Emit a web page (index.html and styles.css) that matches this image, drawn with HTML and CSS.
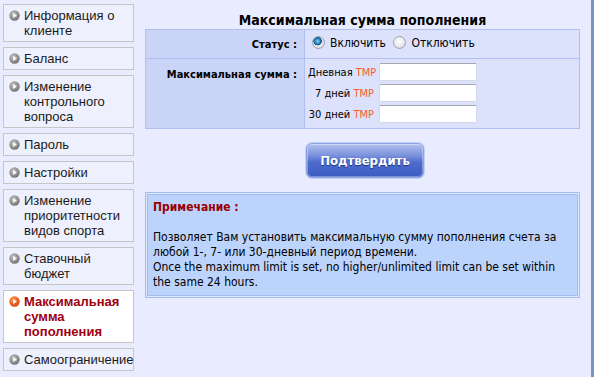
FILE: index.html
```html
<!DOCTYPE html>
<html>
<head>
<meta charset="utf-8">
<link rel="stylesheet" href="styles.css">
</head>
<body>
<div class="page">
  <nav class="side">
    <div class="item"><svg class="ico" viewBox="0 0 11 11"><defs><radialGradient id="g" cx="40%" cy="35%" r="70%"><stop offset="0" stop-color="#c4c4c4"/><stop offset="1" stop-color="#6e6e6e"/></radialGradient></defs><circle cx="5.5" cy="5.5" r="5.2" fill="url(#g)"/><path d="M4.2 3 L7.8 5.5 L4.2 8 Z" fill="#fff"/></svg><span>Информация о клиенте</span></div>
    <div class="item"><svg class="ico" viewBox="0 0 11 11"><circle cx="5.5" cy="5.5" r="5.2" fill="url(#g)"/><path d="M4.2 3 L7.8 5.5 L4.2 8 Z" fill="#fff"/></svg><span>Баланс</span></div>
    <div class="item"><svg class="ico" viewBox="0 0 11 11"><circle cx="5.5" cy="5.5" r="5.2" fill="url(#g)"/><path d="M4.2 3 L7.8 5.5 L4.2 8 Z" fill="#fff"/></svg><span>Изменение контрольного вопроса</span></div>
    <div class="item"><svg class="ico" viewBox="0 0 11 11"><circle cx="5.5" cy="5.5" r="5.2" fill="url(#g)"/><path d="M4.2 3 L7.8 5.5 L4.2 8 Z" fill="#fff"/></svg><span>Пароль</span></div>
    <div class="item"><svg class="ico" viewBox="0 0 11 11"><circle cx="5.5" cy="5.5" r="5.2" fill="url(#g)"/><path d="M4.2 3 L7.8 5.5 L4.2 8 Z" fill="#fff"/></svg><span>Настройки</span></div>
    <div class="item"><svg class="ico" viewBox="0 0 11 11"><circle cx="5.5" cy="5.5" r="5.2" fill="url(#g)"/><path d="M4.2 3 L7.8 5.5 L4.2 8 Z" fill="#fff"/></svg><span>Изменение приоритетности видов спорта</span></div>
    <div class="item"><svg class="ico" viewBox="0 0 11 11"><circle cx="5.5" cy="5.5" r="5.2" fill="url(#g)"/><path d="M4.2 3 L7.8 5.5 L4.2 8 Z" fill="#fff"/></svg><span>Ставочный бюджет</span></div>
    <div class="item active"><svg class="ico" viewBox="0 0 11 11"><defs><radialGradient id="o" cx="40%" cy="35%" r="70%"><stop offset="0" stop-color="#ff9a50"/><stop offset="1" stop-color="#d8420e"/></radialGradient></defs><circle cx="5.5" cy="5.5" r="5.2" fill="url(#o)"/><path d="M4.2 3 L7.8 5.5 L4.2 8 Z" fill="#fff"/></svg><span>Максимальная сумма пополнения</span></div>
    <div class="item"><svg class="ico" viewBox="0 0 11 11"><circle cx="5.5" cy="5.5" r="5.2" fill="url(#g)"/><path d="M4.2 3 L7.8 5.5 L4.2 8 Z" fill="#fff"/></svg><span>Самоограничение</span></div>
  </nav>
  <main class="main">
    <h1 class="title">Максимальная сумма пополнения</h1>
    <table class="form">
      <tr>
        <th class="lbl status-lbl">Статус :</th>
        <td class="val status">
          <label class="opt"><input type="radio" name="st" class="radio" checked> Включить</label>
          <label class="opt"><input type="radio" name="st" class="radio"> Отключить</label>
        </td>
      </tr>
      <tr>
        <th class="lbl sum-lbl">Максимальная сумма :</th>
        <td class="val">
          <div class="limits">
            <span class="lim-lbl">Дневная <span class="cur">TMP</span></span><input class="inp" type="text">
            <span class="lim-lbl">7 дней <span class="cur">TMP</span></span><input class="inp" type="text">
            <span class="lim-lbl">30 дней <span class="cur">TMP</span></span><input class="inp" type="text">
          </div>
        </td>
      </tr>
    </table>
    <div class="actions"><button class="btn" type="button">Подтвердить</button></div>
    <div class="note">
      <div class="note-title">Примечание :</div>
      <p class="note-text">Позволяет Вам установить максимальную сумму пополнения счета за любой 1-, 7- или 30-дневный период времени.<br>Once the maximum limit is set, no higher/unlimited limit can be set within the same 24 hours.</p>
    </div>
  </main>
</div>
</body>
</html>
```
FILE: styles.css
```css
html, body {
  margin: 0;
  padding: 0;
  background: #e8ecfe;
}
.page {
  box-sizing: border-box;
  width: 594px;
  height: 377px;
  border-right: 3px solid #7a92cc;
  display: flex;
  overflow: hidden;
}
.side {
  width: 131px;
  margin-left: 3px;
  padding-top: 4px;
  display: flex;
  flex-direction: column;
  gap: 5px;
}
.item {
  display: flex;
  align-items: flex-start;
  gap: 4px;
  box-sizing: border-box;
  width: 131px;
  padding: 3px 0 3px 5px;
  border: 1px solid #c6c6c6;
  background: #eef1fd;
  font: 13px/15px "Liberation Sans", Arial, sans-serif;
  color: #1a1a1a;
}
.ico {
  flex: none;
  width: 11px;
  height: 11px;
  margin-top: 2px;
}
.item.active {
  background: #ffffff;
  color: #a00010;
  font-weight: bold;
}
.main {
  width: 435px;
  margin-left: 11px;
  font-family: "DejaVu Sans Condensed", "DejaVu Sans", sans-serif;
  color: #000;
}
.title {
  margin: 0;
  padding-top: 12px;
  font-size: 14px;
  line-height: 17px;
  font-weight: bold;
  text-align: center;
}
.form {
  width: 435px;
  border-collapse: collapse;
  font-size: 12px;
}
.form th, .form td {
  border: 1px solid #b2bff2;
  padding: 0;
}
.lbl {
  width: 151px;
  background: #cad4f7;
  text-align: right;
  font-size: 11px;
  font-weight: bold;
  padding-right: 7px !important;
  white-space: nowrap;
}
.status-lbl {
  height: 28px;
  vertical-align: middle;
}
.sum-lbl {
  vertical-align: top;
  padding-top: 8px !important;
  line-height: 15px;
}
.val {
  background: #dce2fb;
}
.status {
  padding-left: 7px !important;
  font-size: 12px;
}
.opt {
  display: inline-flex;
  align-items: center;
  gap: 5px;
  margin-right: 4px;
}
.radio {
  appearance: none;
  -webkit-appearance: none;
  margin: 0;
  width: 13px;
  height: 13px;
  border-radius: 50%;
  border: 1px solid #9ea3b0;
  background: radial-gradient(circle at 45% 40%, #ffffff 0%, #eaeaf0 50%, #c6c8d2 100%);
  box-sizing: border-box;
  position: relative;
}
.radio:checked {
  background:
    radial-gradient(circle at 42% 38%, #8fd4f4 0px, #2e8ac8 2.5px, #15507e 4px, transparent 4.5px),
    radial-gradient(circle at 45% 40%, #ffffff 0%, #eaeaf0 50%, #c6c8d2 100%);
}
.limits {
  display: grid;
  grid-template-columns: 66px 98px;
  column-gap: 5px;
  row-gap: 3px;
  align-items: center;
  padding: 4px 0 5px 3px;
  font-size: 11px;
}
.lim-lbl {
  text-align: right;
  white-space: nowrap;
}
.cur {
  color: #ff5a2a;
}
.inp {
  box-sizing: border-box;
  width: 98px;
  height: 18px;
  margin: 0;
  border: 1px solid #d4d8e4;
  border-top-color: #a4a6b0;
  border-radius: 2px;
  background: #fff;
}
.actions {
  display: flex;
  justify-content: center;
  padding-left: 5px;
  margin-top: 14px;
}
.btn {
  box-sizing: border-box;
  width: 118px;
  height: 35px;
  border: 1px solid #8da2e2;
  border-radius: 6px;
  background: linear-gradient(#b3c1f0 0%, #7a91dc 35%, #4f6ccc 55%, #3c5cc2 100%);
  box-shadow: inset 0 0 0 1px rgba(255,255,255,0.35), 0 0 0 1px #c3cff4;
  color: #fff;
  font: bold 13px "DejaVu Sans Condensed", "DejaVu Sans", sans-serif;
  text-shadow: 0 1px 1px #1c2f80;
  padding: 0;
}
.note {
  margin-top: 14px;
  box-sizing: border-box;
  width: 435px;
  height: 106px;
  border: 1px solid #a3bdf0;
  box-shadow: inset 0 0 0 1px #dde7fd, inset 0 0 0 2px #a3bdf0;
  background: #bcd3fb;
  padding: 7px 8px 0 7px;
  font-size: 12px;
  line-height: 15px;
}
.note-title {
  color: #990000;
  font-weight: bold;
}
.note-text {
  margin: 15px 0 0;
}
```
